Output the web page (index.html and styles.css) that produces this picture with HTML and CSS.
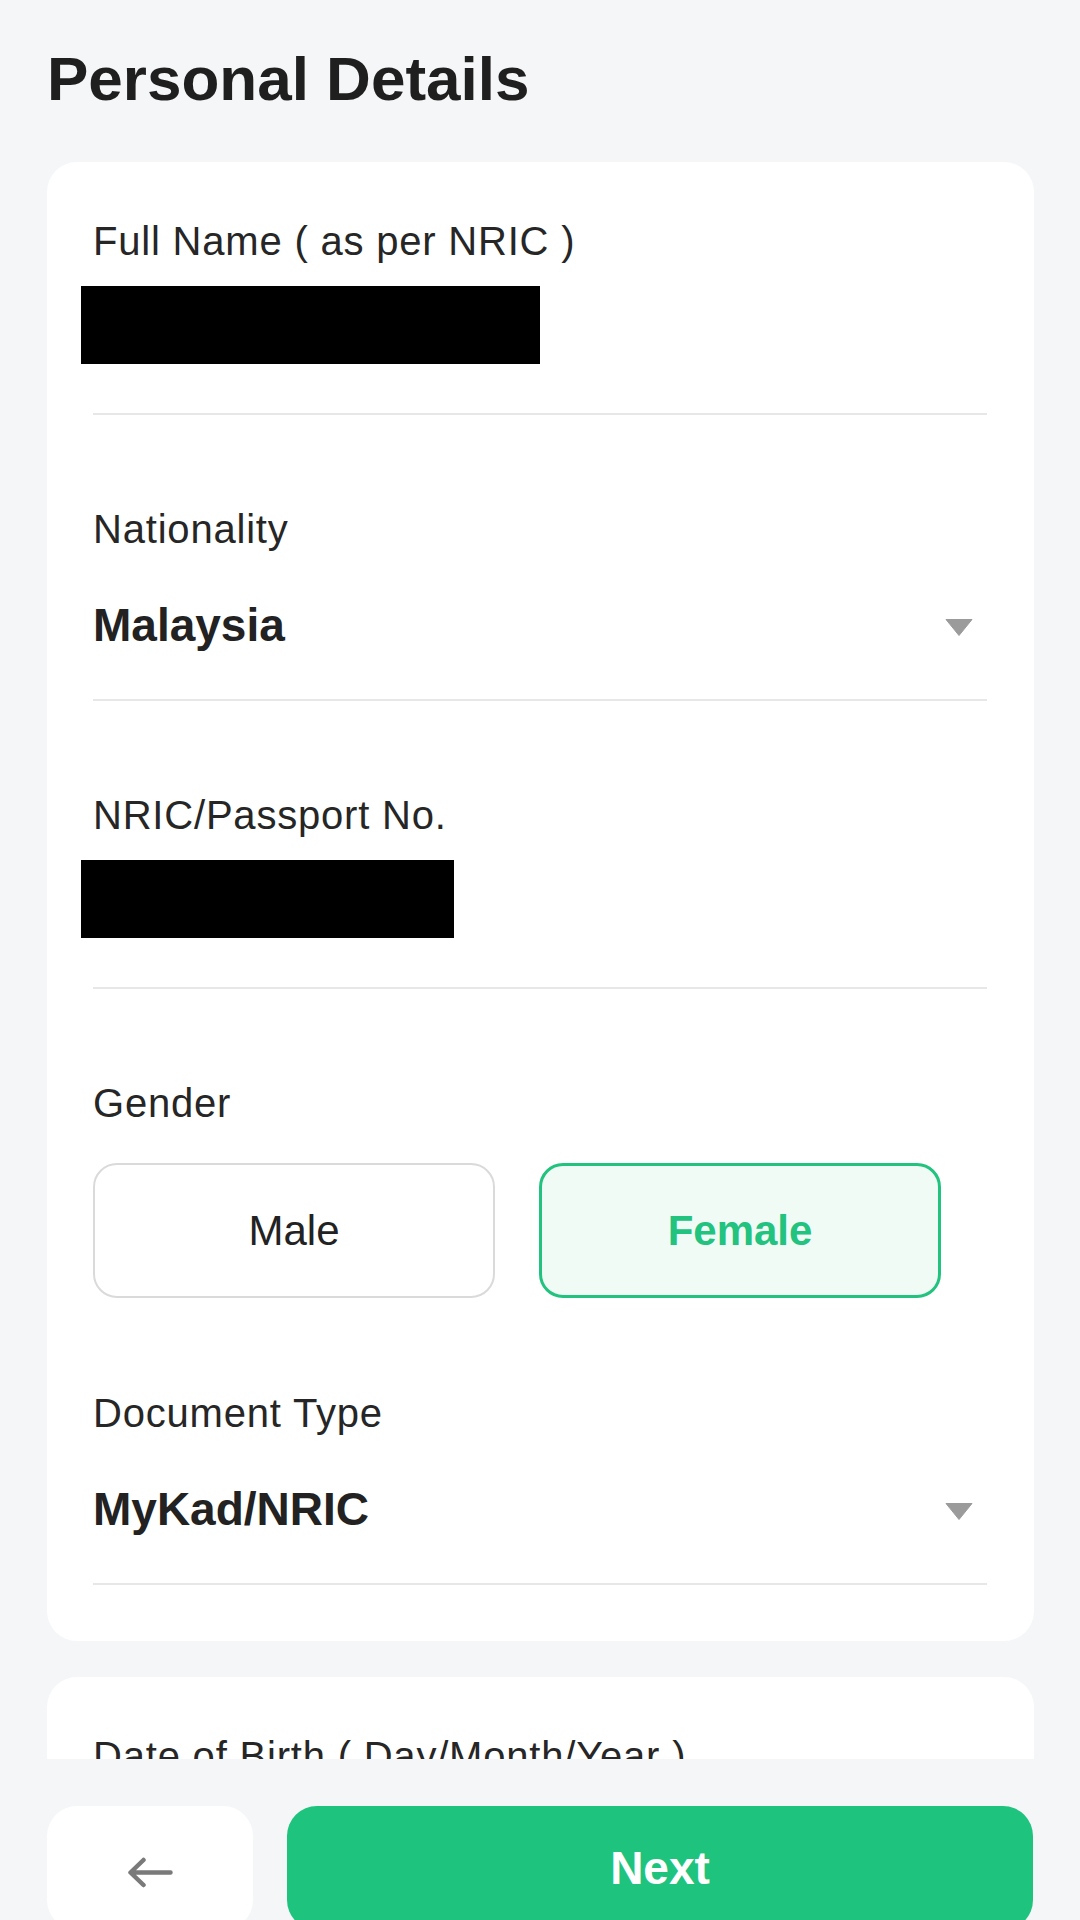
FILE: index.html
```html
<!DOCTYPE html>
<html lang="en">
<head>
  <meta charset="UTF-8" />
  <meta name="viewport" content="width=device-width, initial-scale=1.0"/>
  <title>Personal Details</title>
  <link rel="stylesheet" href="styles.css">
</head>
<body>
  <div class="page">
    <div class="content">
      <h1 class="page-title">Personal Details</h1>

      <div class="card">
        <div class="field">
          <div class="field-label">Full Name ( as per NRIC )</div>
          <div class="redacted redacted-name"></div>
        </div>

        <div class="field">
          <div class="field-label">Nationality</div>
          <div class="select-value">
            <span>Malaysia</span>
            <svg class="caret" width="28" height="17" viewBox="0 0 28 17">
              <path d="M1 0.5 H27 L14 16.5 Z" fill="#9b9b9b" stroke="#9b9b9b" stroke-linejoin="round" />
            </svg>
          </div>
        </div>

        <div class="field">
          <div class="field-label">NRIC/Passport No.</div>
          <div class="redacted redacted-id"></div>
        </div>

        <div class="field no-line">
          <div class="field-label">Gender</div>
          <div class="gender-options">
            <button class="gender-btn">Male</button>
            <button class="gender-btn active">Female</button>
          </div>
        </div>

        <div class="field">
          <div class="field-label">Document Type</div>
          <div class="select-value">
            <span>MyKad/NRIC</span>
            <svg class="caret" width="28" height="17" viewBox="0 0 28 17">
              <path d="M1 0.5 H27 L14 16.5 Z" fill="#9b9b9b" stroke="#9b9b9b" stroke-linejoin="round" />
            </svg>
          </div>
        </div>
      </div>

      <div class="card">
        <div class="field">
          <div class="field-label">Date of Birth ( Day/Month/Year )</div>
        </div>
      </div>
    </div>

    <!-- 하단 버튼 -->
    <div class="bottom-bar">
      <button class="back-btn" aria-label="Back">
        <svg width="46" height="31" viewBox="0 0 46 31">
          <path d="M43.5 15.5 H4 M16.5 3 L3.5 15.5 L16.5 28" fill="none" stroke="#7a7a7a" stroke-width="4.5" stroke-linecap="round" stroke-linejoin="round" />
        </svg>
      </button>
      <button class="next-btn">Next</button>
    </div>
  </div>
</body>
</html>
```

FILE: styles.css
```css
* {
  box-sizing: border-box;
}
html, body {
  margin: 0;
  height: 100%;
}
body {
  font-family: 'Liberation Sans', Arial, sans-serif;
  background-color: #f5f6f8;
  color: #222;
  overflow: hidden;
}

.page {
  height: 1920px;
  display: flex;
  flex-direction: column;
}

.content {
  height: 1759px;
  flex-shrink: 0;
  overflow: hidden;
  padding: 0 46px 0 47px;
}

.page-title {
  margin: 0;
  padding-top: 43px;
  font-size: 62px;
  line-height: 72px;
  font-weight: 700;
  color: #1f1f1f;
}

.card {
  margin-top: 47px;
  padding: 0 47px 56px 46px;
  background-color: #fff;
  border-radius: 30px;
}
.card + .card {
  margin-top: 36px;
}

.field {
  padding: 90px 0 46px;
  border-bottom: 2px solid #e7e7e7;
}
.field:first-child {
  padding-top: 55px;
}
.field.no-line {
  padding-bottom: 0;
  border-bottom: none;
}
.field.no-line + .field {
  padding-top: 91px;
}

.field-label {
  font-size: 40px;
  line-height: 48px;
  letter-spacing: 0.8px;
  color: #262626;
}

/* 가려진 입력값 */
.redacted {
  height: 78px;
  margin: 21px 0 3px -12px;
  background-color: #000;
}
.redacted-name {
  width: 459px;
}
.redacted-id {
  width: 373px;
}

.select-value {
  margin-top: 44px;
  display: flex;
  align-items: center;
  justify-content: space-between;
  font-size: 46px;
  line-height: 56px;
  font-weight: 700;
  color: #222;
}
.caret {
  margin-right: 14px;
  margin-top: 4px;
}

.gender-options {
  margin-top: 36px;
  display: flex;
  gap: 44px;
}
.gender-btn {
  width: 402px;
  height: 135px;
  border: 2px solid #dadada;
  border-radius: 24px;
  background-color: #fff;
  font-family: inherit;
  font-size: 42px;
  color: #222;
  cursor: pointer;
}
.gender-btn.active {
  border: 3px solid #22c27f;
  background-color: #f1fbf6;
  color: #22c27f;
  font-weight: 700;
}

.bottom-bar {
  flex: 1;
  display: flex;
  gap: 34px;
  padding: 47px 47px 0;
  background-color: #f5f6f8;
}
.back-btn {
  width: 206px;
  height: 124px;
  flex-shrink: 0;
  border: none;
  border-radius: 30px;
  background-color: #fff;
  display: flex;
  align-items: center;
  justify-content: center;
  padding: 8px 0 0;
  cursor: pointer;
}
.next-btn {
  flex: 1;
  height: 124px;
  border: none;
  border-radius: 30px;
  background-color: #1ec47e;
  color: #fff;
  font-family: inherit;
  font-size: 46px;
  font-weight: 700;
  cursor: pointer;
}
```
